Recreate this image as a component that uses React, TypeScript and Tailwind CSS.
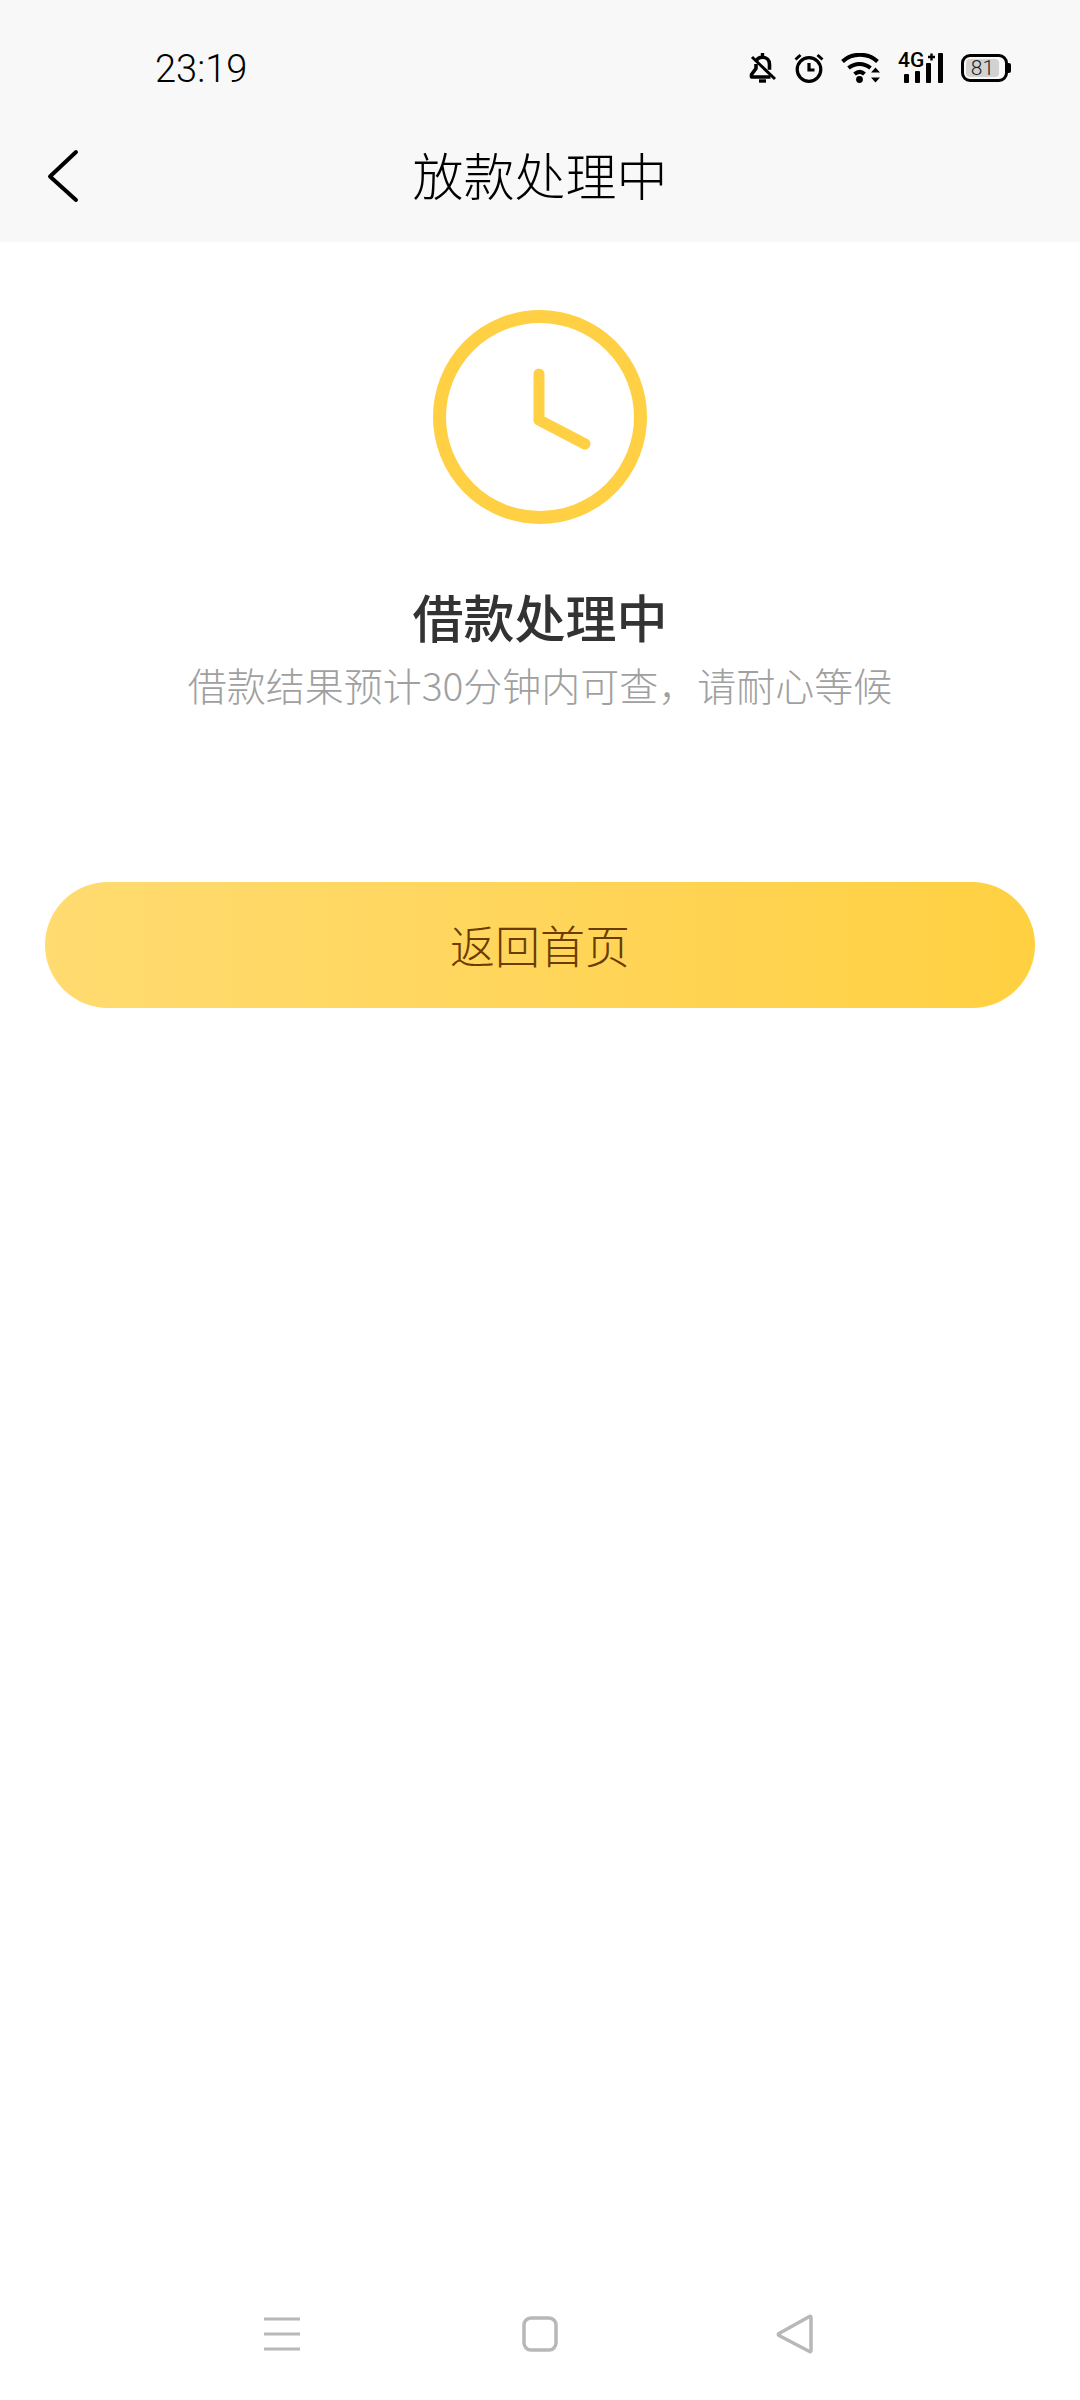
const font = { fontFamily: '"Noto Sans CJK SC", Roboto, sans-serif' }

const BellOff = () => (
    <svg width="28" height="30" viewBox="0 0 28 30" fill="none" stroke="#000" strokeWidth="3.6">
        <path d="M13.5 0v4" strokeWidth="3.4" />
        <path d="M7 8.500c1-2.600 3.600-4.300 6.500-4.300 4.200 0 7 3.200 7 7v5.500" />
        <path d="M7 11v4.500L2.500 21.500v2.500h19" strokeLinejoin="round" />
        <path d="M3 4l23 22" strokeWidth="3" />
        <path d="M10 28h7" strokeWidth="3.400" />
    </svg>
)

const Alarm = () => (
    <svg width="30" height="30" viewBox="0 0 30 30" fill="none" stroke="#000" strokeWidth="3.2">
        <circle cx="15" cy="16.500" r="11.800" />
        <path d="M15 10v7h5.500" />
        <path d="M1.500 6.500l5-4.500M28.500 6.500l-5-4.500" strokeWidth="3" />
    </svg>
)

const Wifi = () => (
    <svg width="40" height="30" viewBox="0 0 40 30" fill="none" stroke="#000">
        <path d="M1.500 8.500C11-.5 27-.5 36.500 8.500" strokeWidth="4" />
        <path d="M7.500 15c6.500-5.500 15.500-5.500 22 0" strokeWidth="4" />
        <path d="M13.500 21c3.500-2.800 7-2.800 10 0" strokeWidth="4" />
        <circle cx="18.500" cy="26.500" r="3.400" fill="#000" stroke="none" />
        <path d="M34.500 14.500l-4.500 5h9zM34.500 29.500l-4.500-5h9z" fill="#000" stroke="none" />
    </svg>
)

const Signal = () => (
    <div className="relative w-[46px] h-[30px]">
        <span className="absolute left-0 top-[-4px] text-[21px] leading-[22px] font-medium text-black" style={{ fontFamily: 'Roboto, sans-serif' }}>4G</span>
        <svg width="46" height="30" viewBox="0 0 46 30">
            <path d="M30 4h7M33.500 0.500v7" stroke="#000" strokeWidth="2.400" />
            <rect x="6" y="21" width="5" height="9" rx="1" />
            <rect x="17" y="18" width="5" height="12" rx="1" />
            <rect x="28" y="10" width="5" height="20" rx="1" />
            <rect x="40" y="0" width="5" height="30" rx="1" />
        </svg>
    </div>
)

const Battery = () => (
    <div className="flex items-center">
        <div className="w-[47px] h-[28px] rounded-[9px] border-[3px] border-black p-[2px] flex">
            <div className="w-[33px] h-full rounded-[4px] bg-[#d2d2d2] flex items-center justify-center text-[21px] leading-none font-light text-[#222]" style={{ fontFamily: 'Roboto, sans-serif' }}>
                81
            </div>
        </div>
        <div className="w-[3px] h-[10px] bg-black rounded-r-[2px]" />
    </div>
)

const StatusBar = () => (
    <div className="h-[136px] pt-[49px] pl-[155px] pr-[69px] flex items-start justify-between">
        <span className="text-[38px] leading-[40px] font-light text-black" style={{ fontFamily: 'Roboto, sans-serif' }}>23:19</span>
        <div className="flex items-center h-[38px] gap-[17px]">
            <BellOff />
            <Alarm />
            <Wifi />
            <Signal />
            <Battery />
        </div>
    </div>
)

const App = () => {
    return (
        <div className="w-[1080px] h-[2400px] bg-white flex flex-col overflow-hidden" style={font}>
            <header className="bg-[#f8f8f8] h-[242px]">
                <StatusBar />
                <div className="relative h-[76px] flex items-center justify-center">
                    <svg className="absolute left-[44px] top-[12px]" width="38" height="56" viewBox="0 0 38 56" fill="none" stroke="#000" strokeWidth="4" strokeLinecap="round" strokeLinejoin="round">
                        <path d="M32 4L6 28.500 32 52" />
                    </svg>
                    <h1 className="text-[51px] leading-[60px] font-light text-black">放款处理中</h1>
                </div>
            </header>

            <main className="flex flex-col items-center pt-[68px]">
                <svg width="214" height="214" viewBox="0 0 214 214" fill="none" stroke="#ffd044" strokeLinecap="round" strokeLinejoin="round">
                    <circle cx="107" cy="107" r="100.500" strokeWidth="13" />
                    <path d="M106 64v46l46 24" strokeWidth="11" />
                </svg>
                <h2 className="mt-[57px] text-[51px] leading-[70px] font-medium text-[#333333]">借款处理中</h2>
                <p className="mt-[8px] text-[39px] leading-[50px] font-light text-[#a0a0a0]">借款结果预计30分钟内可查，请耐心等候</p>
                <button className="mt-[173px] w-[990px] h-[126px] rounded-full bg-gradient-to-r from-[#ffdb70] to-[#ffd040] text-[45px] font-light text-[#6b3c00] flex items-center justify-center">
                    返回首页
                </button>
            </main>

            <footer className="mt-auto h-[132px] flex items-center justify-between pl-[264px] pr-[266px]">
                <svg width="36" height="34" viewBox="0 0 36 34" stroke="#b8b8b8" strokeWidth="3">
                    <path d="M0 2h36M0 17h36M0 32h36" />
                </svg>
                <svg className="ml-[3px]" width="36" height="36" viewBox="0 0 36 36" fill="none" stroke="#b8b8b8" strokeWidth="3.500">
                    <rect x="2" y="2" width="32" height="32" rx="7" />
                </svg>
                <svg width="38" height="40" viewBox="0 0 38 40" fill="none" stroke="#b8b8b8" strokeWidth="3.500" strokeLinejoin="round">
                    <path d="M35 3.500v33q0 1.800-2 .8L3 21.500Q1.500 20.500 3 19.500L33 2.700q2-1 2 .8z" />
                </svg>
            </footer>
        </div>
    )
}

export default App
